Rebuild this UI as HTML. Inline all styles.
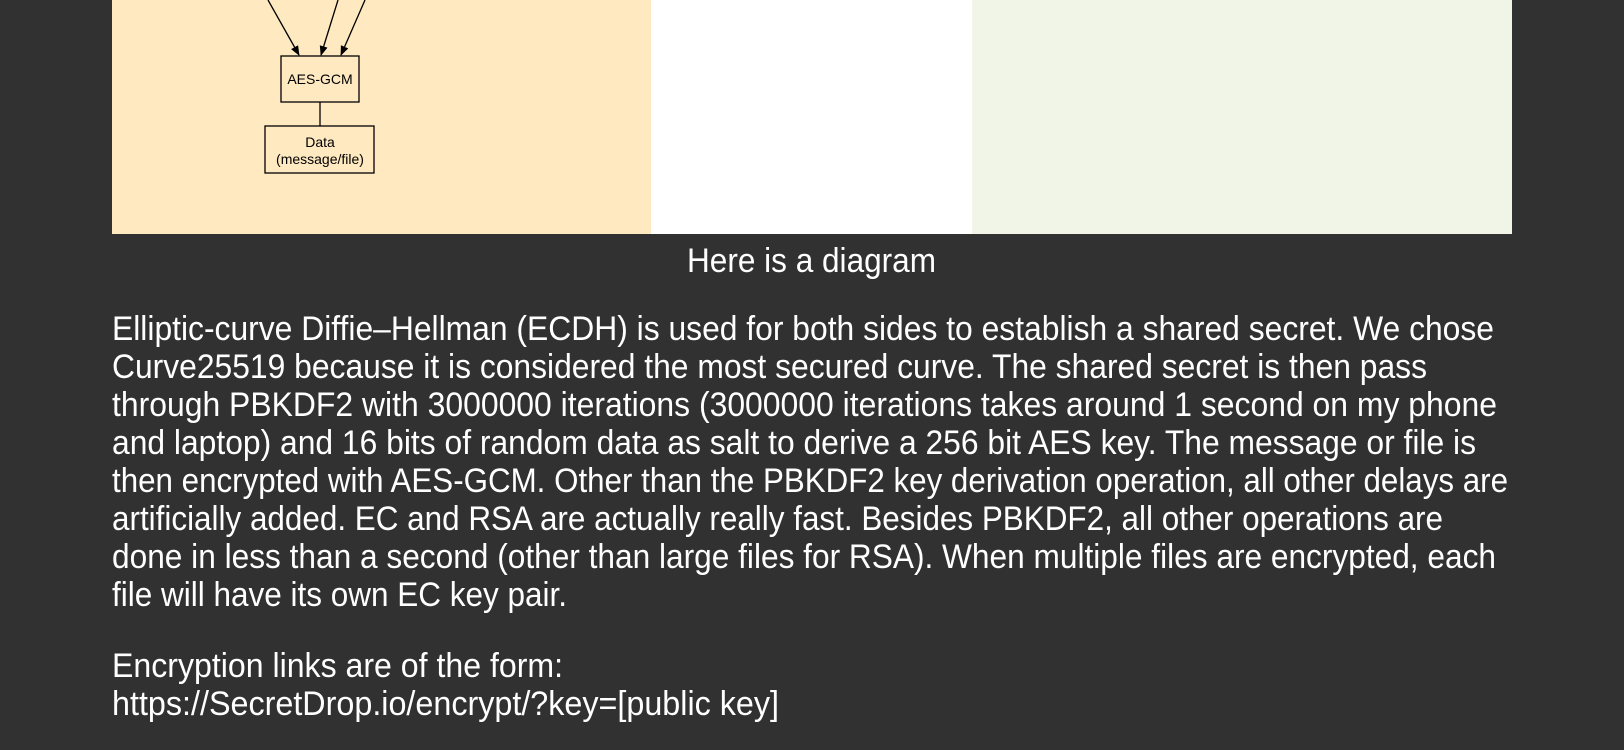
<!DOCTYPE html>
<html><head><meta charset="utf-8"><style>
html,body{margin:0;padding:0;background:#313131;width:1624px;height:750px;overflow:hidden}
svg{display:block}
.t{font-family:"Liberation Sans",Arial,sans-serif;font-size:34px;fill:#fff}
.s{font-family:"Liberation Sans",Arial,sans-serif;font-size:14px;fill:#000}
</style></head><body>
<svg width="1624" height="750" viewBox="0 0 1624 750" xmlns="http://www.w3.org/2000/svg">
<rect x="0" y="0" width="1624" height="750" fill="#313131"/>
<rect x="112" y="0" width="539" height="234" fill="#FFE9C1"/>
<rect x="651" y="0" width="321" height="234" fill="#FFFFFF"/>
<rect x="972" y="0" width="540" height="234" fill="#F0F5E7"/>
<defs><marker id="a" markerWidth="10" markerHeight="10" refX="9" refY="5" orient="auto" markerUnits="userSpaceOnUse"><path d="M0,1 L10,5 L0,9 z" fill="#000"/></marker></defs>
<g stroke="#000" stroke-width="1.3" fill="none">
<line x1="268" y1="0" x2="299" y2="55" marker-end="url(#a)"/>
<line x1="338" y1="0" x2="321" y2="55" marker-end="url(#a)"/>
<line x1="365" y1="0" x2="341" y2="55" marker-end="url(#a)"/>
<rect x="281" y="56" width="78" height="46"/>
<line x1="320" y1="102" x2="320" y2="126"/>
<rect x="265" y="126" width="109" height="47"/>
</g>
<text class="s" x="320" y="84" text-anchor="middle">AES-GCM</text>
<text class="s" x="320" y="147" text-anchor="middle">Data</text>
<text class="s" x="320" y="164" text-anchor="middle">(message/file)</text>
<text class="t" x="687" y="272" textLength="249" lengthAdjust="spacingAndGlyphs">Here is a diagram</text>
<text class="t" x="112" y="340" textLength="1382" lengthAdjust="spacingAndGlyphs">Elliptic-curve Diffie–Hellman (ECDH) is used for both sides to establish a shared secret. We chose</text>
<text class="t" x="112" y="378" textLength="1315" lengthAdjust="spacingAndGlyphs">Curve25519 because it is considered the most secured curve. The shared secret is then pass</text>
<text class="t" x="112" y="416" textLength="1385" lengthAdjust="spacingAndGlyphs">through PBKDF2 with 3000000 iterations (3000000 iterations takes around 1 second on my phone</text>
<text class="t" x="112" y="454" textLength="1364" lengthAdjust="spacingAndGlyphs">and laptop) and 16 bits of random data as salt to derive a 256 bit AES key. The message or file is</text>
<text class="t" x="112" y="492" textLength="1396" lengthAdjust="spacingAndGlyphs">then encrypted with AES-GCM. Other than the PBKDF2 key derivation operation, all other delays are</text>
<text class="t" x="112" y="530" textLength="1331" lengthAdjust="spacingAndGlyphs">artificially added. EC and RSA are actually really fast. Besides PBKDF2, all other operations are</text>
<text class="t" x="112" y="568" textLength="1384" lengthAdjust="spacingAndGlyphs">done in less than a second (other than large files for RSA). When multiple files are encrypted, each</text>
<text class="t" x="112" y="606" textLength="455" lengthAdjust="spacingAndGlyphs">file will have its own EC key pair.</text>
<text class="t" x="112" y="677" textLength="451" lengthAdjust="spacingAndGlyphs">Encryption links are of the form:</text>
<text class="t" x="112" y="715" textLength="667" lengthAdjust="spacingAndGlyphs">https://SecretDrop.io/encrypt/?key=[public key]</text>
</svg>
</body></html>
